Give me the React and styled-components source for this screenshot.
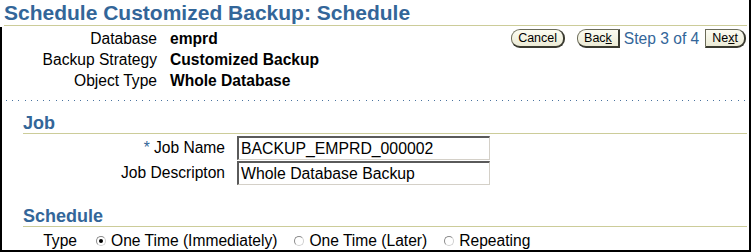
import React from "react";
import styled, { createGlobalStyle } from "styled-components";

const Global = createGlobalStyle`
  html, body { margin: 0; padding: 0; background: #ffffff; }
  body { font-family: "Liberation Sans", Arial, sans-serif; }
`;

const BLUE = "#336699";
const OLIVE = "#cccc99";

const Page = styled.div`
  box-sizing: border-box;
  width: 751px;
  height: 252px;
  border-right: 2px solid #000;
  border-bottom: 2px solid #000;
  overflow: hidden;
  background: #fff;
  font-family: "Liberation Sans", Arial, sans-serif;
  font-size: 15.6px;
  color: #000;
`;

const TitleBar = styled.div`
  margin: 0 2px 0 4px;
  padding-top: 1px;
  border-bottom: 1px solid ${OLIVE};
`;

const Title = styled.h1`
  margin: 0;
  font-size: 21px;
  line-height: 24px;
  font-weight: bold;
  color: ${BLUE};
  white-space: nowrap;
`;

const Body = styled.div`
  margin-top: 1px;
  border-left: 2px solid #000;
  height: 300px;
`;

const InfoSection = styled.div`
  display: flex;
  justify-content: space-between;
  align-items: flex-start;
  padding-top: 1px;
  padding-right: 3px;
`;

const InfoGrid = styled.div`
  display: grid;
  grid-template-columns: 155px auto;
  column-gap: 13px;
  grid-auto-rows: 21px;
  line-height: 21px;
`;

const Label = styled.div`
  text-align: right;
  white-space: nowrap;
`;

const Value = styled.div`
  font-weight: bold;
  white-space: nowrap;
`;

const Toolbar = styled.div`
  display: flex;
  align-items: center;
  margin-top: 1px;
  height: 19px;
`;

const Button = styled.button`
  box-sizing: border-box;
  height: 19px;
  padding: 0 6px;
  margin: 0;
  margin-left: ${(p) => p.$ml || 0}px;
  font-family: "Liberation Sans", Arial, sans-serif;
  font-size: 12.5px;
  line-height: 15px;
  color: #000;
  background: linear-gradient(#fcfcf2, #ecebd6);
  border: 1px solid #6b6b58;
  border-right: 2px solid #3a3a30;
  border-bottom: 2px solid #3a3a30;
  border-radius: ${(p) =>
    p.$shape === "left"
      ? "9px 0 0 9px"
      : p.$shape === "right"
      ? "0 9px 9px 0"
      : "9px"};
  cursor: pointer;
  u { text-decoration: underline; }
`;

const StepText = styled.span`
  color: ${BLUE};
  font-size: 15.6px;
  line-height: 19px;
  margin: 0 6px 0 4px;
  white-space: nowrap;
`;

const DottedRule = styled.div`
  margin: 9px 3px 0 4px;
  height: 1px;
  background-image: repeating-linear-gradient(
    to right,
    #4a74a0 0,
    #4a74a0 1px,
    transparent 1px,
    transparent 6.2px
  );
`;

const SectionHeader = styled.h2`
  margin: ${(p) => p.$mt}px 2px 0 21px;
  font-size: 18px;
  line-height: 20px;
  font-weight: bold;
  color: ${BLUE};
  border-bottom: 1px solid ${OLIVE};
`;

const FormGrid = styled.div`
  display: grid;
  grid-template-columns: 223px 253px;
  column-gap: 12px;
  row-gap: 1px;
  grid-auto-rows: 24px;
  margin-top: 2px;
  align-items: center;
`;

const Required = styled.span`
  color: ${BLUE};
  margin-right: 4px;
`;

const TextInput = styled.input`
  box-sizing: border-box;
  width: 253px;
  height: 24px;
  margin: 0;
  padding: 0 2px 0 2px;
  font-family: "Liberation Sans", Arial, sans-serif;
  font-size: 15.8px;
  color: #000;
  background: #fff;
  border-style: solid;
  border-width: 2px 1px 1px 2px;
  border-color: #5a5a5a #d4d0c8 #d4d0c8 #5a5a5a;
  outline: none;
`;

const TypeRow = styled.div`
  display: flex;
  align-items: center;
  margin-top: 3px;
  height: 21px;
  line-height: 21px;
`;

const TypeLabel = styled.div`
  width: 75px;
  text-align: right;
`;

const Options = styled.div`
  display: flex;
  align-items: center;
  gap: 17px;
  margin-left: 19px;
`;

const Option = styled.label`
  display: flex;
  align-items: center;
  gap: 5px;
  white-space: nowrap;
`;

const Radio = styled.span`
  box-sizing: border-box;
  width: 10px;
  height: 10px;
  border-radius: 50%;
  border: 1px solid;
  border-color: #8a8a8a #d0d0d0 #d0d0d0 #8a8a8a;
  background: #fff;
  display: inline-flex;
  align-items: center;
  justify-content: center;
  &::after {
    content: "";
    width: 4px;
    height: 4px;
    border-radius: 50%;
    background: ${(p) => (p.$checked ? "#000" : "transparent")};
  }
`;

export default function App() {
  const info = [
    ["Database", "emprd"],
    ["Backup Strategy", "Customized Backup"],
    ["Object Type", "Whole Database"],
  ];
  return (
    <>
      <Global />
      <Page>
        <TitleBar>
          <Title>Schedule Customized Backup: Schedule</Title>
        </TitleBar>
        <Body>
          <InfoSection>
            <InfoGrid>
              {info.map(([l, v]) => (
                <React.Fragment key={l}>
                  <Label>{l}</Label>
                  <Value>{v}</Value>
                </React.Fragment>
              ))}
            </InfoGrid>
            <Toolbar>
              <Button>Cancel</Button>
              <Button $shape="left" $ml={12}>
                Bac<u>k</u>
              </Button>
              <StepText>Step 3 of 4</StepText>
              <Button $shape="right">
                Ne<u>x</u>t
              </Button>
            </Toolbar>
          </InfoSection>
          <DottedRule />
          <SectionHeader $mt={12}>Job</SectionHeader>
          <FormGrid>
            <Label>
              <Required>*</Required>Job Name
            </Label>
            <TextInput defaultValue="BACKUP_EMPRD_000002" />
            <Label>Job Descripton</Label>
            <TextInput defaultValue="Whole Database Backup" />
          </FormGrid>
          <SectionHeader $mt={21}>Schedule</SectionHeader>
          <TypeRow>
            <TypeLabel>Type</TypeLabel>
            <Options>
              <Option>
                <Radio $checked />
                One Time (Immediately)
              </Option>
              <Option>
                <Radio />
                One Time (Later)
              </Option>
              <Option>
                <Radio />
                Repeating
              </Option>
            </Options>
          </TypeRow>
        </Body>
      </Page>
    </>
  );
}
